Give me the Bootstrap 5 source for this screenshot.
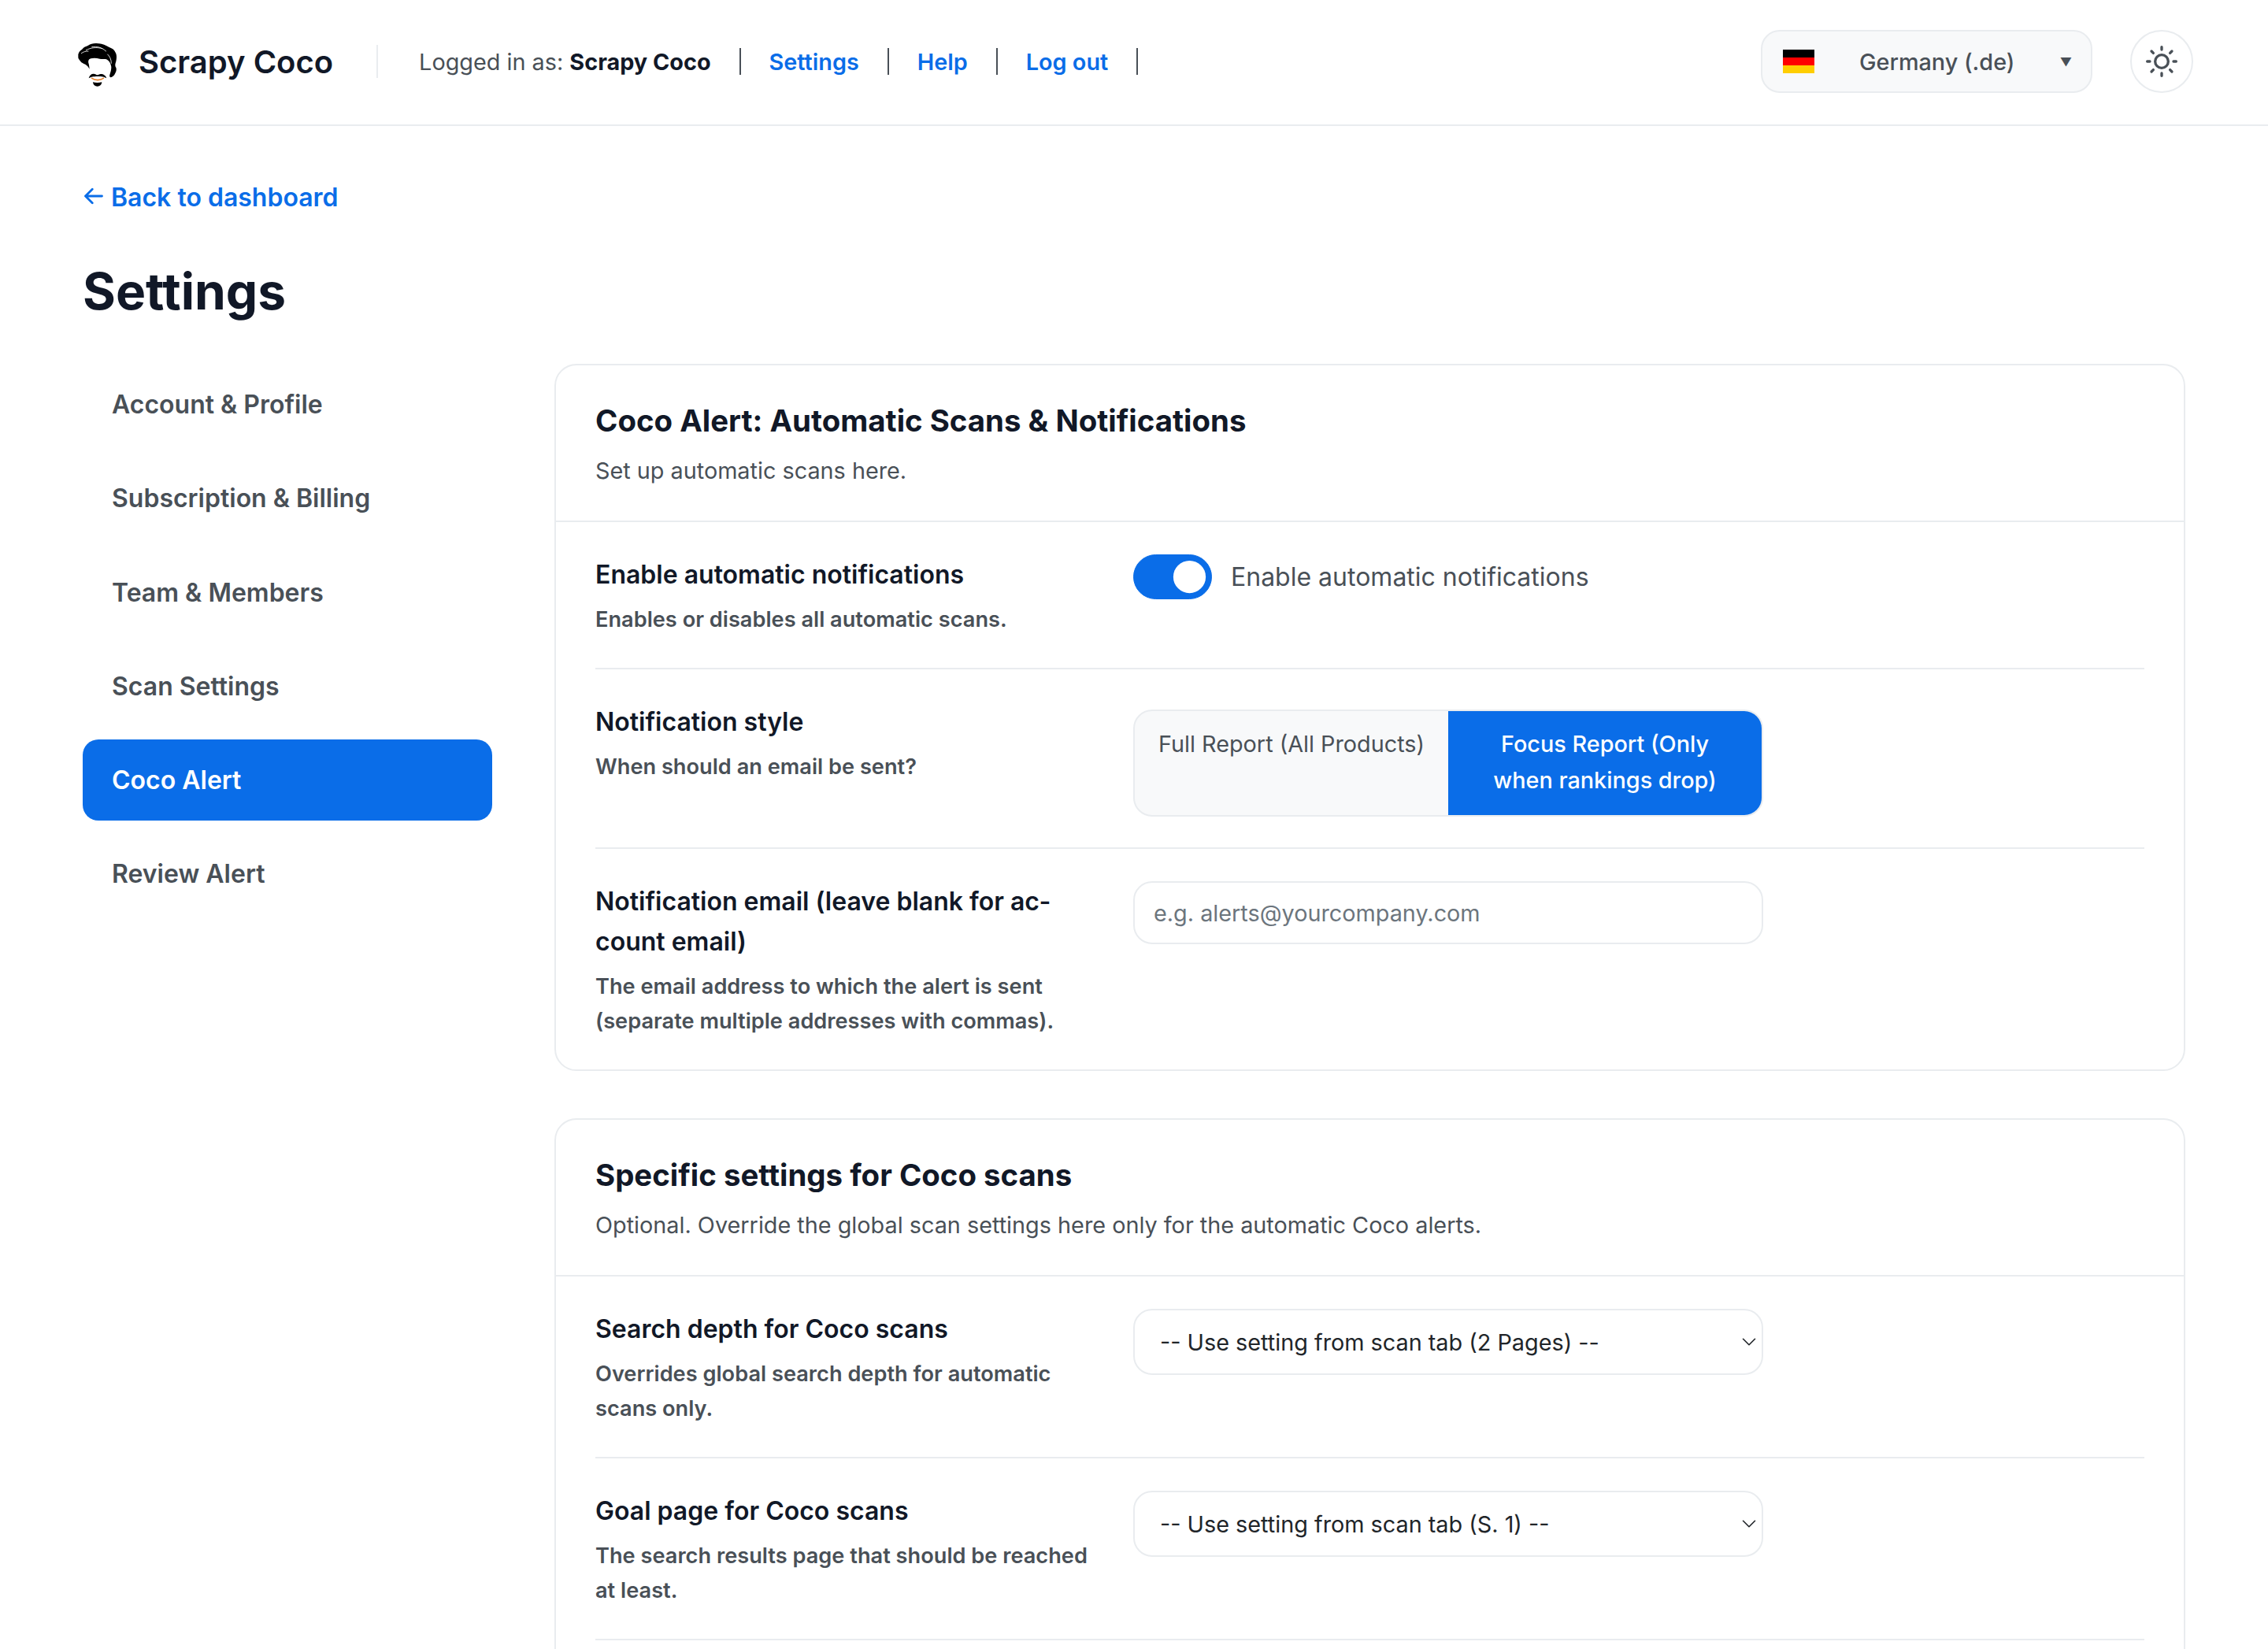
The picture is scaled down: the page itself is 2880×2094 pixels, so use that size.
<!DOCTYPE html>
<html lang="en">
<head>
  <meta charset="UTF-8" />
  <meta name="viewport" content="width=device-width, initial-scale=1.0"/>
  <title>Settings - Scrapy Coco</title>
  <link href="https://cdn.jsdelivr.net/npm/bootstrap@5.3.0/dist/css/bootstrap.min.css" rel="stylesheet"/>
  <style>
    html, body { height: 2094px; overflow: hidden; }
    body { font-family: "Inter", "Liberation Sans", sans-serif; font-size: 32px; line-height: 1.6; color: #111827; background: #fff; }
    a { text-decoration: none; color: #0a6de8; }
    .top-bar { height: 160px; border-bottom: 2px solid #e9ecef; padding: 0 95px 2px 97px; }
    .logo-svg { width: 100px; height: 90px; margin-left: -27px; margin-right: 6px; flex: none; }
    .brand-name { font-size: 40px; font-weight: 600; color: #111827; margin-top: 2px; }
    .brand-rule { width: 2px; height: 42px; background: #e9ecef; margin: 0 52px 0 55px; }
    .who, .top-link { font-size: 28.8px; margin-top: 2px; }
    .who { color: #495057; }
    .who b { font-weight: 700; color: #111827; }
    .top-link { font-weight: 600; }
    .top-sep { width: 2px; height: 34px; background: #495057; margin: 0 36px; }
    .lang-box { width: 421px; height: 80px; border: 2px solid #e9ecef; border-radius: 24px; background: #f8f9fa; padding: 0 24px 0 26px; color: #495057; font-size: 28.8px; font-weight: 500; margin-right: 48px; }
    .flag-svg { width: 40px; height: 30px; flex: none; }
    .lang-name { margin-left: 57px; margin-top: 2px; }
    .lang-caret { margin-left: auto; font-size: 15px; line-height: 1; }
    .sun-btn { width: 80px; height: 80px; border: 2px solid #e9ecef; border-radius: 50%; background: #fff; padding: 0; }
    .sun-btn svg { width: 40px; height: 40px; }
    .page-wrap { padding: 65px 105px 0; }
    .back-link { font-size: 32px; font-weight: 600; }
    .back-link svg { width: 28px; height: 28px; margin-right: 8px; margin-top: -3px; }
    .page-title { font-size: 64px; line-height: 82px; font-weight: 700; color: #111827; margin: 52px 0 51px; }
    .side-col { width: 520px; flex: none; margin-right: 79px; }
    .side-col .nav-link { padding: 26px 37px; font-size: 32px; font-weight: 600; color: #495057; border-radius: 20px; }
    .side-col .nav-link.active { background: #0a6de8; color: #fff; }
    .panel { border: 2px solid #e9ecef; border-radius: 28px; background: #fff; margin-bottom: 60px; }
    .panel-head { padding: 44px 50px 40px; border-bottom: 2px solid #e9ecef; }
    .panel-title { font-size: 38.4px; line-height: 52px; font-weight: 700; margin: 0 0 15px; color: #111827; }
    .panel-note { font-size: 28.8px; line-height: 46px; color: #495057; margin: 0; }
    .panel-rows { padding: 0 50px; }
    .set-row { padding: 41px 0 39px; border-bottom: 2px solid #e9ecef; }
    .set-row:last-child { border-bottom: 0; }
    .set-text { width: 642px; flex: none; margin-right: 41px; }
    .set-label { font-size: 32px; font-weight: 600; line-height: 51px; margin: 0 0 10px; color: #111827; }
    .set-hint { font-size: 27.2px; line-height: 44px; font-weight: 600; color: #495057; margin: 0; }
    .set-control { width: 800px; flex: none; }
    .form-switch .form-check-input.big-switch { width: 100px; height: 57px; margin: 0 24px 0 0; background-color: #0a6de8; border-color: #0a6de8; float: none; }
    .switch-text { font-size: 32px; color: #495057; }
    .seg-group { margin-top: 10px; border: 2px solid #e9ecef; border-radius: 24px; overflow: hidden; background: #f8f9fa; }
    .seg-item { font-size: 28.8px; line-height: 46px; padding: 19px 20px 21px; color: #495057; width: 50%; text-align: center; }
    .seg-item.on { padding-left: 30px; padding-right: 30px; background: #0a6de8; color: #fff; font-weight: 500; }
    .text-field, .select-field { border: 2px solid #e9ecef; border-radius: 24px; }
    .text-field { height: 80px; font-size: 28.8px; padding: 0 24px; }
    .text-field::placeholder { color: #6c757d; }
    .select-field { height: 84px; font-size: 28.8px; padding: 0 60px 0 32px; color: #212529; background-position: right 6px center; background-size: 20px 20px; background-image: url("data:image/svg+xml,%3csvg xmlns='http://www.w3.org/2000/svg' viewBox='0 0 16 16'%3e%3cpath fill='none' stroke='%23212529' stroke-linecap='round' stroke-linejoin='round' stroke-width='1.3' d='M2 5l6 6 6-6'/%3e%3c/svg%3e"); }
    .tail-space { height: 300px; }
  </style>
</head>
<body>

<header class="top-bar d-flex align-items-center">
  <a href="#" class="d-flex align-items-center">
    <svg class="logo-svg" viewBox="0 0 300 270" aria-hidden="true">
      <path fill="#000" d="M88 108c3-10 8-14 16-20 4-8 14-10 22-14 10-7 24-9 38-7 14-1 28 6 42 14 12 4 20 10 24 20 6 10 4 24 2 34-3 8-4 14-2 20 4 4 4 12 2 18-4 10-8 18-17 22-6 2-9-3-7-9 3-10 6-18 6-30-2-12-6-22-16-28-8-4-18-1-28-3-12-3-24-4-34-1-10 3-11 12-8 20 2 8 2 14 3 20-4-8-9-14-16-18-8-3-14-6-18-11-4-5-8-9-9-14z"/>
      <g fill="none" stroke="#fff" stroke-width="2.5" stroke-linecap="round">
        <path d="M118 92c18-10 40-12 62-6"/>
        <path d="M140 80c20-4 38 2 54 16"/>
        <path d="M100 104c8-6 16-8 26-8"/>
        <path d="M200 108c8 8 14 18 14 34"/>
      </g>
      <path fill="#000" d="M128 199c3-12 12-18 22-16 5 1 8 4 11 4s7-4 13-4c10 0 19 6 22 16-10-5-16-7-34-7s-24 2-34 7z"/>
      <path fill="none" stroke="#e8802a" stroke-width="5" stroke-linecap="round" d="M140 199c12 9 32 9 44 0"/>
      <path fill="#000" d="M144 214c10 3 24 3 34 0-1 10-8 16-17 16s-16-6-17-16z"/>
    </svg>
    <span class="brand-name">Scrapy Coco</span>
  </a>
  <span class="brand-rule"></span>
  <span class="who">Logged in as: <b>Scrapy Coco</b></span>
  <span class="top-sep"></span>
  <a href="#" class="top-link">Settings</a>
  <span class="top-sep"></span>
  <a href="#" class="top-link">Help</a>
  <span class="top-sep"></span>
  <a href="#" class="top-link">Log out</a>
  <span class="top-sep"></span>

  <div class="lang-box d-flex align-items-center ms-auto">
    <svg class="flag-svg" viewBox="0 0 4 3" aria-hidden="true">
      <rect width="4" height="1" y="0" fill="#000"/>
      <rect width="4" height="1" y="1" fill="#f00"/>
      <rect width="4" height="1" y="2" fill="#ffce00"/>
    </svg>
    <span class="lang-name">Germany (.de)</span>
    <span class="lang-caret">▼</span>
  </div>
  <button type="button" class="sun-btn d-flex align-items-center justify-content-center" aria-label="Theme">
    <svg viewBox="0 0 24 24" fill="none" stroke="#495057" stroke-width="2" stroke-linecap="round">
      <circle cx="12" cy="12" r="5"/>
      <path d="M12 1v2M12 21v2M4.22 4.22l1.42 1.42M18.36 18.36l1.42 1.42M1 12h2M21 12h2M4.22 19.78l1.42-1.42M18.36 5.64l1.42-1.42"/>
    </svg>
  </button>
</header>

<main class="page-wrap">
  <a href="#" class="back-link d-inline-flex align-items-center">
    <svg viewBox="0 0 16 16" fill="none" stroke="#0a6de8" stroke-width="1.6" stroke-linecap="round" stroke-linejoin="round"><path d="M14 8H2M7 3 2 8l5 5"/></svg>Back to dashboard
  </a>
  <h1 class="page-title">Settings</h1>

  <div class="d-flex align-items-start">
    <nav class="side-col nav nav-pills flex-column gap-3">
      <a class="nav-link" href="#">Account &amp; Profile</a>
      <a class="nav-link" href="#">Subscription &amp; Billing</a>
      <a class="nav-link" href="#">Team &amp; Members</a>
      <a class="nav-link" href="#">Scan Settings</a>
      <a class="nav-link active" href="#">Coco Alert</a>
      <a class="nav-link" href="#">Review Alert</a>
    </nav>

    <div class="flex-grow-1">
      <section class="panel">
        <div class="panel-head">
          <h2 class="panel-title">Coco Alert: Automatic Scans &amp; Notifications</h2>
          <p class="panel-note">Set up automatic scans here.</p>
        </div>
        <div class="panel-rows">
          <div class="set-row d-flex">
            <div class="set-text">
              <p class="set-label">Enable automatic notifications</p>
              <p class="set-hint">Enables or disables all automatic scans.</p>
            </div>
            <div class="set-control">
              <div class="form-check form-switch d-flex align-items-center p-0 m-0">
                <input class="form-check-input big-switch" type="checkbox" role="switch" id="autoNotify" checked>
                <label class="switch-text" for="autoNotify">Enable automatic notifications</label>
              </div>
            </div>
          </div>
          <div class="set-row d-flex">
            <div class="set-text">
              <p class="set-label">Notification style</p>
              <p class="set-hint">When should an email be sent?</p>
            </div>
            <div class="set-control">
              <div class="seg-group d-flex">
                <div class="seg-item">Full Report (All Products)</div>
                <div class="seg-item on">Focus Report (Only when rankings drop)</div>
              </div>
            </div>
          </div>
          <div class="set-row d-flex">
            <div class="set-text">
              <p class="set-label">Notification email (leave blank for ac&shy;count email)</p>
              <p class="set-hint">The email address to which the alert is sent (separate multiple addresses with commas).</p>
            </div>
            <div class="set-control">
              <input type="text" class="form-control text-field" placeholder="e.g. alerts@yourcompany.com">
            </div>
          </div>
        </div>
      </section>

      <section class="panel">
        <div class="panel-head">
          <h2 class="panel-title">Specific settings for Coco scans</h2>
          <p class="panel-note">Optional. Override the global scan settings here only for the automatic Coco alerts.</p>
        </div>
        <div class="panel-rows">
          <div class="set-row d-flex">
            <div class="set-text">
              <p class="set-label">Search depth for Coco scans</p>
              <p class="set-hint">Overrides global search depth for automatic scans only.</p>
            </div>
            <div class="set-control">
              <select class="form-select select-field"><option>-- Use setting from scan tab (2 Pages) --</option></select>
            </div>
          </div>
          <div class="set-row d-flex">
            <div class="set-text">
              <p class="set-label">Goal page for Coco scans</p>
              <p class="set-hint">The search results page that should be reached at least.</p>
            </div>
            <div class="set-control">
              <select class="form-select select-field"><option>-- Use setting from scan tab (S. 1) --</option></select>
            </div>
          </div>
          <div class="set-row tail-space"></div>
        </div>
      </section>
    </div>
  </div>
</main>

<script src="https://cdn.jsdelivr.net/npm/bootstrap@5.3.0/dist/js/bootstrap.bundle.min.js"></script>
</body>
</html>
